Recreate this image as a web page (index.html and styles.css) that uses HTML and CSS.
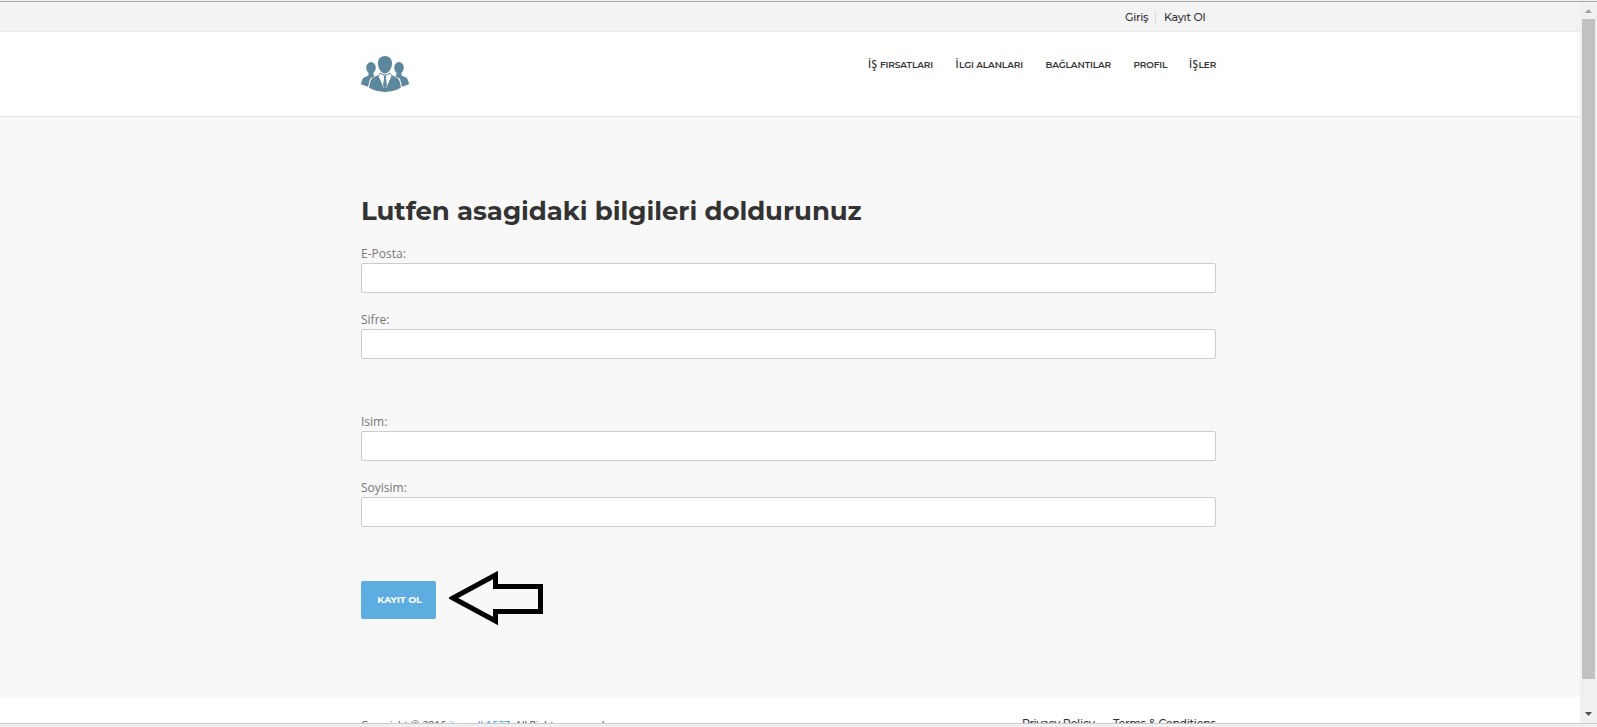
FILE: index.html
```
<!DOCTYPE html>
<html lang="tr">
<head>
<meta charset="utf-8">
<title>Kayıt Ol</title>
<link rel="stylesheet" href="styles.css">
</head>
<body>
<div class="window">
  <div class="page">
    <div class="topbar"><div class="wrap topbar-in"><a class="login">Giriş</a><a class="signup">Kayıt Ol</a></div></div>
    <header class="header"><div class="wrap header-in">
      <svg class="logo" viewBox="0 0 48 37" width="48" height="36" preserveAspectRatio="none" fill="#5c879c">
        <ellipse cx="10" cy="12" rx="4.800" ry="5.800"/><ellipse cx="38" cy="12" rx="4.800" ry="5.800"/>
        <path d="M7.500 15v5L3 22q-2 1-3 7l7 2.500 2-8 5-3-1.500-1V15zM40.500 15v5l4.500 2q2 1 3 7l-7 2.500-2-8-5-3 1.500-1V15z"/>
        <path d="M24 0c5 0 7.500 4 7 8.500-.5 5-3.500 9.500-7 9.500s-6.500-4.500-7-9.500C16.500 4 19 0 24 0z"/>
        <path d="M19 17l-1 2-6.500 3.500Q9 25 8 32.500 15 37 24 37t16-4.500q-1-7.500-3.500-10L30 19l-1-2q-5 4-10 0z"/>
        <path fill="#fff" d="M19 18.500l5 1.500 5-1.500 1.500 2L25.500 32h-3l-5-11.500z"/>
        <path d="M22.500 20h3l-.7 2.500L26 30l-2 3-2-3 1.200-7.500z"/>
      </svg>
      <nav class="nav"><a class="n1"><span class="sub">İŞ</span> FIRSATLARI</a><a class="n2"><span class="sub">İ</span>LGI ALANLARI</a><a class="n3">BAĞLANTILAR</a><a class="n4">PROFIL</a><a class="n5"><span class="sub">İŞ</span>LER</a></nav>
    </div></header>
    <main class="main"><form class="wrap form">
      <h1>Lutfen asagidaki bilgileri doldurunuz</h1>
      <label>E-Posta:<input type="text"></label>
      <label>Sifre:<input type="password"></label>
      <label class="gap">Isim:<input type="text"></label>
      <label>Soyisim:<input type="text"></label>
      <div class="actions"><button type="button">KAYIT OL</button>
        <svg class="arrow" width="94" height="54" viewBox="0 0 94 54" fill="none" stroke="#000" stroke-width="5"><path d="M4 27L46.500 4v11.500h45v25h-45V50z"/></svg>
      </div>
    </form></main>
    <footer class="footer"><div class="wrap footer-in">
      <span class="copy">Copyright © 2016 <a>itwordk1637</a>. All Rights reserved.</span>
      <span class="links"><a class="privacy">Privacy Policy</a><a class="terms">Terms &amp; Conditions</a></span>
    </div></footer>
  </div>
  <div class="scroll"><i class="up"></i><i class="thumb"></i><i class="down"></i></div>
</div>
</body>
</html>
```
FILE: styles.css
```
* { box-sizing: border-box; }
body { margin: 0; height: 727px; overflow: hidden; background: #f0f0f0; font-family: "Open Sans", sans-serif; }
.window { display: flex; height: 724px; border-top: 1px solid #f0f0f0; border-bottom: 1px solid #ccc; overflow: hidden; }
.page { width: 1580px; height: 722px; overflow: hidden; background: #fff; border-top: 1px solid #aaa; }
.wrap { width: 855px; margin-left: 361px; }
.topbar, .nav, h1, button, .links { font-family: Montserrat, Inter, sans-serif; }
.topbar { height: 30px; background: #f3f3f3; border-bottom: 1px solid #e8e8e8; }
.topbar-in { display: flex; justify-content: flex-end; padding: 8px 11px 0 0; font-size: 11px; line-height: 14px; font-weight: 500; color: #333; white-space: nowrap; letter-spacing: -.25px; }
.login { width: 31px; height: 14px; border-right: 1px solid #ddd; }
.signup { width: 49px; padding-left: 8px; }
.header { height: 85px; border-bottom: 1px solid #e5e5e5; background: #fff; }
.header-in { display: flex; justify-content: space-between; }
.logo { margin-top: 24px; }
.nav { display: flex; margin-top: 26px; font-size: 9px; line-height: 14px; font-weight: 600; color: #333; white-space: nowrap; letter-spacing: -.12px; }
.sub { font: 600 10px/0 "Open Sans", sans-serif; letter-spacing: .5px; }
.n1 { width: 87.500px; }
.n2 { width: 90px; }
.n3 { width: 88px; }
.n4 { width: 55.500px; }
.n5 { width: 27px; }
.main { height: 580px; background: #f8f8f8; }
.form { padding-top: 74px; }
h1 { margin: 0 0 14px; height: 40px; font-size: 26px; line-height: 40px; font-weight: 700; color: #333; white-space: nowrap; letter-spacing: -.05px; }
label { display: block; height: 66px; font-size: 12px; line-height: 18px; color: #777; }
input { display: block; width: 855px; height: 30px; margin: 0; border: 1px solid #ccc; border-radius: 2px; background: #fff; }
.gap { margin-top: 36px; }
.actions { display: flex; margin-top: 28px; padding-top: 8px; }
button { width: 75px; height: 38px; border: 0; border-radius: 2px; background: #5dade0; color: #fff; font-size: 9.500px; font-weight: 700; padding: 0 0 1px 2px; white-space: nowrap; letter-spacing: -.1px; }
.arrow { margin: -10px 0 0 13px; }
.footer { background: #fff; }
.footer-in { display: flex; justify-content: space-between; font-size: 11px; color: #555; white-space: nowrap; }
.copy { padding-top: 19px; line-height: 18px; letter-spacing: -.28px; }
.copy a { color: #2a8fee; }
.links { display: flex; padding-top: 18px; font-weight: 500; line-height: 16px; color: #333; letter-spacing: -.28px; }
.privacy { width: 91px; }
.terms { width: 103px; }
.scroll { width: 17px; height: 722px; background: #f0f0f0; border-top: 1px solid #aaa; display: flex; flex-direction: column; align-items: center; }
.up, .down { width: 7px; height: 4px; }
.up { margin: 7px 0 6px; background: #a3a3a3; clip-path: polygon(50% 0, 100% 100%, 0 100%); }
.down { margin-top: 33px; background: #505050; clip-path: polygon(0 0, 100% 0, 50% 100%); }
.thumb { width: 13px; height: 660px; background: #c1c1c1; }
```
